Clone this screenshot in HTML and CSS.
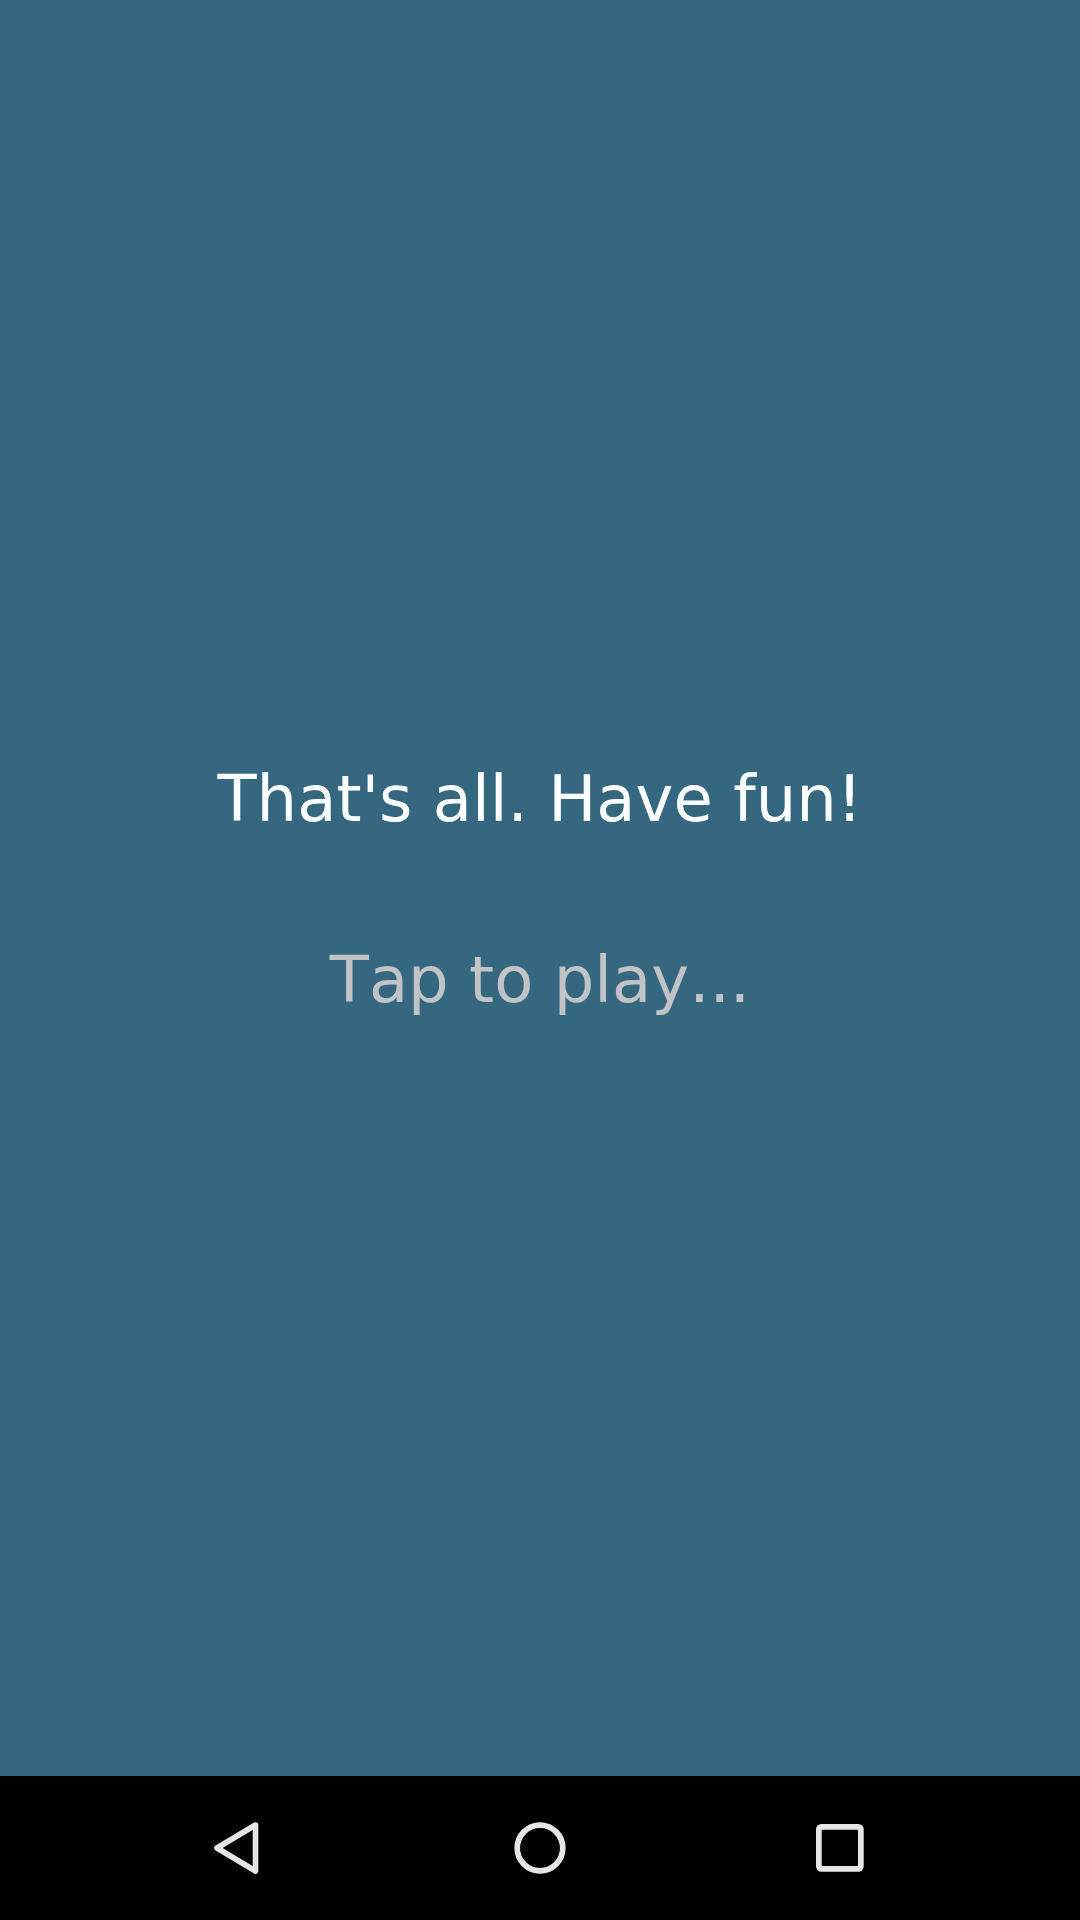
FILE: index.html
```html
<!DOCTYPE html>
<html>
<head>
<meta charset="utf-8">
<link rel="stylesheet" href="styles.css">
</head>
<body>
<div class="screen">
  <main class="content">
    <p class="title">That's all. Have fun!</p>
    <p class="tap">Tap to play...</p>
  </main>
  <nav class="navbar">
    <div class="navbtn">
      <svg width="48" height="52" viewBox="0 0 48 52"><path d="M42.5 3 L4 26 L42.5 49 Z" fill="none" stroke="#e6e6e6" stroke-width="5.6" stroke-linejoin="round"/></svg>
    </div>
    <div class="navbtn">
      <svg width="52" height="52" viewBox="0 0 52 52"><circle cx="26" cy="26" r="22.8" fill="none" stroke="#e6e6e6" stroke-width="5.7"/></svg>
    </div>
    <div class="navbtn">
      <svg width="48" height="48" viewBox="0 0 48 48"><rect x="2.85" y="2.85" width="42" height="42" rx="2.5" fill="none" stroke="#e6e6e6" stroke-width="5.7"/></svg>
    </div>
  </nav>
</div>
</body>
</html>
```
FILE: styles.css
```css
html, body {
  margin: 0;
  padding: 0;
  width: 1080px;
  height: 1920px;
  overflow: hidden;
}
.screen {
  display: flex;
  flex-direction: column;
  width: 1080px;
  height: 1920px;
  font-family: "DejaVu Sans", sans-serif;
}
.content {
  flex: 0 0 1776px;
  background: #346880;
  display: flex;
  flex-direction: column;
  align-items: center;
  padding-top: 762px;
  box-sizing: border-box;
  gap: 106px;
}
.content p {
  margin: 0;
  font-size: 64px;
  line-height: 75px;
  text-align: center;
  white-space: nowrap;
}
.title {
  color: #ffffff;
}
.tap {
  color: #c3c3c3;
  font-kerning: none;
}
.navbar {
  flex: 0 0 144px;
  background: #000000;
  display: flex;
  justify-content: center;
  align-items: center;
}
.navbtn {
  width: 300px;
  height: 144px;
  display: flex;
  justify-content: center;
  align-items: center;
}
.navbtn:first-child svg {
  margin-left: -6px;
}
```
